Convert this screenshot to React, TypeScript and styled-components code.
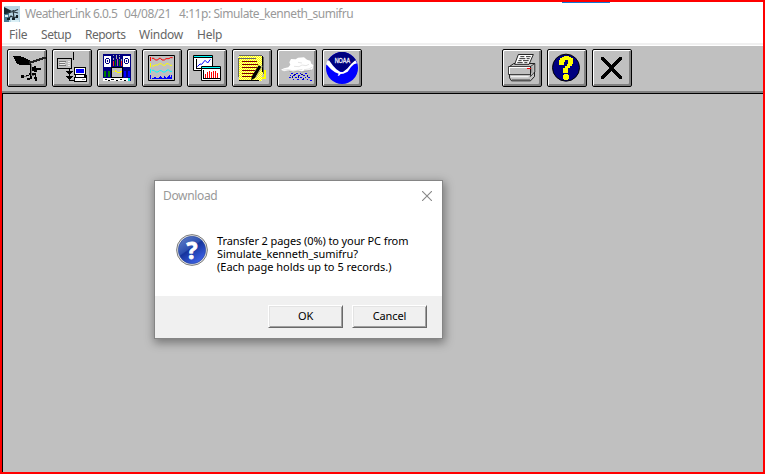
import React from "react";
import styled, { createGlobalStyle } from "styled-components";

const GlobalStyle = createGlobalStyle`
  * { box-sizing: border-box; }
  body { margin: 0; overflow: hidden; }
`;

const AppWindow = styled.div`
  position: relative;
  display: flex;
  flex-direction: column;
  width: 765px;
  height: 474px;
  border: 2px solid #ff0000;
  background: #ffffff;
  font-family: "Noto Sans", "Open Sans", sans-serif;
  font-size: 12px;
`;

const TopAccent = styled.div`
  position: absolute;
  top: 0;
  left: 560px;
  width: 48px;
  height: 1px;
  background: #0f7bd8;
`;

const TitleBar = styled.header`
  display: flex;
  align-items: center;
  height: 23px;
  padding: 1px 0 0 2px;
  color: #999999;
`;

const Title = styled.span<{ $spacing: number; $width?: number; $indent?: number }>`
  width: ${(p) => (p.$width ? `${p.$width}px` : "auto")};
  margin-left: ${(p) => p.$indent ?? 0}px;
  letter-spacing: ${(p) => p.$spacing}px;
  line-height: 16px;
  white-space: nowrap;
`;

const MenuBar = styled.nav`
  display: flex;
  height: 18px;
  padding: 2px 0 0 7px;
  gap: 14px;
  align-items: center;
  color: #666666;
`;

const MenuItem = styled.span<{ $width: number; $spacing?: number }>`
  width: ${(p) => p.$width}px;
  letter-spacing: ${(p) => p.$spacing ?? 0}px;
  line-height: 16px;
  white-space: nowrap;
`;

const Divider = styled.div`
  height: 3px;
  flex: none;
  background: #ffffff;
  border-top: 2px solid #f0f0f0;
`;

const Toolbar = styled.div`
  display: flex;
  flex: none;
  gap: 5px;
  height: 47px;
  padding: 3px 0 0 5px;
  background: #c0c0c0;
  border-bottom: 2px solid #808080;
`;

const ToolButton = styled.button<{ $gapBefore?: number }>`
  width: 40px;
  height: 38px;
  margin: 0 0 0 ${(p) => p.$gapBefore ?? 0}px;
  padding: 0;
  border: 1px solid #000000;
  border-radius: 2px;
  background: #c0c0c0;
  box-shadow: inset 1px 1px 0 #ffffff, inset -2px -2px 0 #808080;
`;

const ToolIcon = styled.svg`
  display: block;
  width: 38px;
  height: 36px;
`;

const Workspace = styled.main`
  flex: 1;
  border-top: 1px solid #000000;
  border-left: 1px solid #000000;
  background: #c0c0c0;
`;

const Dialog = styled.section`
  position: absolute;
  left: 152px;
  top: 178px;
  display: flex;
  flex-direction: column;
  width: 289px;
  height: 159px;
  border: 1px solid #858585;
  background: #ffffff;
  box-shadow: 1px 3px 9px 1px rgba(0, 0, 0, 0.38);
`;

const DialogHeader = styled.div`
  display: flex;
  justify-content: space-between;
  align-items: center;
  height: 29px;
  padding: 0 10px 0 8px;
  color: #999999;
`;

const CloseIcon = styled.svg`
  width: 10px;
  height: 10px;
`;

const DialogBody = styled.div`
  display: flex;
  flex: 1;
  padding: 24px 0 0 21px;
  gap: 9px;
`;

const Message = styled.div`
  color: #000000;
  font-size: 11px;
  line-height: 13px;
`;

const Line = styled.div<{ $spacing: number }>`
  letter-spacing: ${(p) => p.$spacing}px;
  white-space: nowrap;
`;

const DialogFooter = styled.div`
  display: flex;
  justify-content: flex-end;
  gap: 9px;
  height: 42px;
  padding: 9px 15px 0 0;
  background: #f0f0f0;
`;

const PushButton = styled.button`
  width: 75px;
  height: 23px;
  padding: 0 0 1px;
  border: 1px solid;
  border-color: #ffffff #696969 #696969 #ffffff;
  background: #f0f0f0;
  box-shadow: inset 1px 1px 0 #e3e3e3, inset -1px -1px 0 #a0a0a0;
  color: #000000;
  font-family: inherit;
  font-size: 11px;
  letter-spacing: -0.1px;
  line-height: 18px;
`;

const VaneIcon = () => (
  <ToolIcon viewBox="24 18 114 108" shapeRendering="crispEdges">
    <path d="M39 36h24v3h9v3h6v3h6v3h6v15H57v-3h-6v-3h-3v-6h-3v-6h-3v-6h-3z" fill="#000" />
    <path d="M87 51h12v-3h9v-3h9v-3h9v-3h12v6h-9v3h-9v3h-9v3h-9v3h-9v3h-6z" fill="#222" />
    <path d="M90 60h3v36h-3z" fill="#000" />
    <path d="M93 60h3v36h-3z" fill="#777" />
    <path d="M96 69h6v-3h6v6h15v6h-12v6h-9v-3h-6z" fill="#000" />
    <path d="M63 93h9v9h-9zM78 93h9v3h-9zM87 87h6v6h-6zM96 87h12v12h-3v-6h-9zM102 99h9v12h-6v-6h-3zM90 96h6v9h-6zM81 102h9v6h-9z" fill="#000" />
    <path d="M72 96h9v3h-9zM96 93h6v3h-6z" fill="#666" />
  </ToolIcon>
);

const DownloadIcon = () => (
  <ToolIcon viewBox="159 18 114 108" shapeRendering="crispEdges">
    <path d="M219 24h3v24h-3zM171 42h45v33h-45z" fill="#000" />
    <path d="M174 45h39v27h-39z" fill="#c0c0c0" />
    <path d="M177 51h21v3h-21zM177 57h18v3h-18zM177 63h21v3h-21z" fill="#777" />
    <path d="M180 54h15v3h-15zM180 60h15v3h-15zM204 51h6v3h-6zM204 57h6v3h-6zM204 63h6v3h-6z" fill="#eee" />
    <path d="M207 75h3v33h12v3h-15zM198 81h21v3h-3v3h-3v3h-9v-3h-3v-3h-3zM198 96h21v3h-3v3h-3v3h-9v-3h-3v-3h-3zM222 69h36v24h3v21h-39v-15h3v-6h-3z" fill="#000" />
    <path d="M225 72h30v18h-30z" fill="#fff" />
    <path d="M228 75h24v12h-24z" fill="#0000ff" />
    <path d="M228 93h24v6h-24zM225 102h33v9h-33z" fill="#fff" />
    <path d="M246 105h9v3h-9z" fill="#999" />
  </ToolIcon>
);

const BulletinIcon = () => (
  <ToolIcon viewBox="15 18 114 108" shapeRendering="crispEdges">
    <path d="M30 30h84v81H30z" fill="#000080" />
    <path d="M33 36h21v33H33zM90 36h21v33H90z" fill="#fff" />
    <path d="M39 42h9v3h3v12h-3v3h-9v-3h-3V45h3zM96 42h9v3h3v12h-3v3h-9v-3h-3V45h3z" fill="#000080" />
    <path d="M39 45h9v12h-9zM96 45h9v12h-9z" fill="#fff" />
    <path d="M42 48h3v6h-3zM99 48h3v6h-3z" fill="#000080" />
    <path d="M60 33h3v3h-3zM69 33h3v3h-3zM78 33h3v3h-3zM60 42h3v6h-3zM69 36h3v9h-3zM78 39h3v6h-3zM84 45h3v6h-3z" fill="#aaa" />
    <path d="M60 51h3v15h-3zM84 51h3v15h-3z" fill="#ff2020" />
    <path d="M66 48h3v18h-3zM78 48h3v18h-3z" fill="#008000" />
    <path d="M72 45h3v21h-3z" fill="#bd54ae" />
    <path d="M54 69h36v33H54z" fill="#000" />
    <path d="M57 72h30v27H57z" fill="#c0c0c0" />
    <path d="M60 81h6v-3h3v3h3v3h9v-3h6v3h-3v3H72v-3h-6v-3h-3v3h-3z" fill="#ffff00" />
    <path d="M33 81h18v18H33z" fill="#008000" />
    <path d="M39 75h6v30h-6z" fill="#000080" />
    <path d="M93 81h18v18H93z" fill="#0000ff" />
    <path d="M99 75h6v30h-6z" fill="#000080" />
    <path d="M30 102h75v9H30z" fill="#fff" />
    <path d="M36 105h6v3h-6zM45 108h6v3h-6zM54 105h9v3h-9zM69 108h6v3h-6zM81 105h6v3h-6zM93 108h6v3h-6z" fill="#000" />
    <path d="M105 102h6v9h-6z" fill="#00dddd" />
  </ToolIcon>
);

const StripIcon = () => (
  <ToolIcon viewBox="150 18 114 108">
    <path d="M166.500 34.500h78v75h-78z" fill="#c0c0c0" stroke="#000" strokeWidth="3" />
    <g fill="none" strokeWidth="3">
      <path d="M172.500 39v12M177 43h6l4 5h7l4-5h5l4 5h7l5-4h9l4-3h7" stroke="#ff0000" />
      <path d="M172.500 57v12M177 66h6l4-3h7l5-4h6l5 5h6l4-5h6l5 5h6" stroke="#ffff00" />
      <path d="M172.500 75v12M177 79h6l5 5h7l4-4h6l5 4h7l5-6h5l4 4h6" stroke="#00ffff" />
    </g>
    <path d="M171 93h3v12h-3zM177 102h6v-3h6v3h9v-3h3v-3h3v3h3v3h6v-6h3v3h3v3h3v-3h3v-3h3v-3h3v6h3v-6h3v12h-63z" fill="#0000ff" shapeRendering="crispEdges" />
  </ToolIcon>
);

const PlotIcon = () => (
  <ToolIcon viewBox="15 18 114 108">
    <path d="M31.500 34.500h57v45h-57z" fill="#fff" stroke="#000" strokeWidth="3" />
    <path d="M33 36h54v3H33z" fill="#00ffff" />
    <path d="M30 39h60v3H30zM39 45h3v27h42v3H39z" fill="#000" />
    <path d="M43 68l8-8 5 1 10-12 8 8 8-11" fill="none" stroke="#0000ff" strokeWidth="3" />
    <path d="M55.500 67.500h57v42h-57z" fill="#fff" stroke="#000" strokeWidth="3" />
    <path d="M57 69h54v3H57z" fill="#00ffff" />
    <path d="M54 72h60v3H54zM60 78h3v24h48v3H60z" fill="#000" />
    <path d="M66 90h3v12h-3zM72 84h3v18h-3zM78 81h3v21h-3zM84 84h3v18h-3zM90 81h3v21h-3zM96 81h3v21h-3zM102 87h3v15h-3z" fill="#ff0000" />
  </ToolIcon>
);

const NotesIcon = () => (
  <ToolIcon viewBox="150 18 114 108">
    <defs>
      <pattern id="dither" width="6" height="6" patternUnits="userSpaceOnUse">
        <path d="M0 0h6v6H0z" fill="#ffff00" />
        <path d="M0 0h3v3H0zM3 3h3v3H3z" fill="#ffffa0" />
      </pattern>
    </defs>
    <path d="M243 78h6v27h-12v-6h6z" fill="#ffff00" />
    <path d="M168 33h69v12h3v45l-3 6v15h-69V99h-3V39h3z" fill="url(#dither)" />
    <path d="M168 33h69v3h-69zM240 39h3v51h-3zM165 42h3v57h-3zM168 42h51v3h-51z" fill="#666" />
    <path d="M237 36h3v48h-3zM168 108h60v3h-60z" fill="#000" />
    <path d="M177 51h45v3h-45zM177 60h48v3h-48zM177 69h45v3h-45zM177 78h39v3h-39zM177 87h36v3h-36zM177 96h30v3h-30z" fill="#800000" />
    <path d="M227 64l8 4-19 34-12 7 3-13z" fill="#000" />
    <path d="M235 63l3 4-20 35" stroke="#999" strokeWidth="2" fill="none" />
  </ToolIcon>
);

const RainIcon = () => (
  <ToolIcon viewBox="15 18 114 108">
    <path d="M24 77l9-4 13-3 6-8-3-7 5-10 14 1 7-5 18-1 9 7 10 3 3 9 6 4-2 12-10 5-15-1-7 4-12-2-15 3-14-5-13 3z" fill="#fff" />
    <path d="M30 78l16-1 12 3 15-1 15-3M63 67l15 1 9-5 12 2 9-4M93 77l15-2 10-6M75 55l12 2" fill="none" stroke="#d8d8d8" strokeWidth="2" />
    <path d="M48 81l12 3 15-3 12 3 15-3 12-3" fill="none" stroke="#909090" strokeWidth="2" />
    <path d="M54 87h6v3h-6zM69 87h6v3h-6zM81 87h3v3h-3zM96 87h6v3h-6zM51 93h3v3h-3zM60 93h6v3h-6zM75 93h6v3h-6zM90 93h6v3h-6zM48 99h6v3h-6zM66 99h6v3h-6zM81 99h6v3h-6zM96 99h3v3h-3zM105 99h6v3h-6zM60 105h3v3h-3zM72 105h6v3h-6zM87 105h6v3h-6zM102 105h3v3h-3zM111 108h6v3h-6z" fill="#0000ff" />
    <path d="M63 90h6v3h-6zM84 90h6v3h-6zM102 93h3v6h-3zM57 96h3v6h-3zM75 96h3v6h-3zM90 102h3v3h-3z" fill="#000080" />
  </ToolIcon>
);

const NoaaLabel = styled.text`
  fill: #ffffff;
  font-family: "Liberation Sans", sans-serif;
  font-size: 21px;
  stroke: #ffffff;
  stroke-width: 0.8px;
`;

const NoaaIcon = () => (
  <ToolIcon viewBox="150 18 114 108">
    <circle cx="207" cy="72" r="48" fill="#0000ff" />
    <path d="M165 49l7-9 8-7 9-5 11-4h14l11 4 9 5 8 7 7 9-16 14-15 16-9 4-12-3-11-9z" fill="#000080" />
    <path d="M159 61l4-11 5-1 12 16 10 11 12 8h8l14-11 11-14 12-10 5 9-9 3-9 8-10 14-13 6-8 1-5 5h-4l3-6-11-4-12-9-11-12z" fill="#fff" />
    <NoaaLabel x="185" y="56" textLength="46" lengthAdjust="spacingAndGlyphs">NOAA</NoaaLabel>
  </ToolIcon>
);

const PrinterIcon = () => (
  <ToolIcon viewBox="24 18 114 108">
    <path d="M43.500 67.500l13-9H104l14.500 0V97.500l-12 13h-57l-6-9z" fill="#c0c0c0" stroke="#000" strokeWidth="2.500" />
    <path d="M70 31.500h45L102 61H59z" fill="#fff" stroke="#000" strokeWidth="2.500" />
    <path d="M76 38h12M93 38h14M73 44h18M95 44h9M70 50h10M84 50h17M67 56h16M88 56h9" stroke="#000" strokeWidth="2.500" />
    <path d="M40.500 67.500h66v24h-66zM106.500 67.500l13-9v25l-13 14z" fill="#c0c0c0" stroke="#000" strokeWidth="2" />
    <path d="M42 69h63v3H45v18h-3zM47 97h54v3H47z" fill="#fff" />
    <path d="M51 105h54v3H51zM109 70h3v16h-3z" fill="#808080" />
    <path d="M96 72h12v3H96z" fill="#ff0000" />
  </ToolIcon>
);

const HelpIcon = () => (
  <ToolIcon viewBox="159 18 114 108">
    <circle cx="213" cy="71" r="40.500" fill="#000080" stroke="#000" strokeWidth="3" />
    <path d="M192 62V48h3v-6h6v-4h6v-2h15v2h6v4h5v18h-3v6h-6v6h-6v15h-15V72h6v-6h6v-6h3V48h-9v6h-3v8zM204 93h3v-3h12v3h3v12h-3v3h-12v-3h-3z" fill="#ffff00" shapeRendering="crispEdges" />
  </ToolIcon>
);

const ExitIcon = () => (
  <ToolIcon viewBox="294 18 114 108" shapeRendering="crispEdges">
    <path d="M318 39h9v3h3v3h3v3h3v3h3v3h3v3h3v3h3v3h3v-3h3v-3h3v-3h3v-3h3v-3h3v-3h3v-3h3v-3h9v9h-3v3h-3v3h-3v3h-3v3h-3v3h-3v3h-3v3h-3v6h3v3h3v3h3v3h3v3h3v3h3v3h3v3h3v9h-9v-3h-3v-3h-3v-3h-3v-3h-3v-3h-3v-3h-3v-3h-3v-3h-3v3h-3v3h-3v3h-3v3h-3v3h-3v3h-3v3h-3v3h-9v-9h3v-3h3v-3h3v-3h3v-3h3v-3h3v-3h3v-3h3v-6h-3v-3h-3v-3h-3v-3h-3v-3h-3v-3h-3v-3h-3v-3h-3z" fill="#000" />
  </ToolIcon>
);

const AppIcon = () => (
  <svg width="16" height="16" viewBox="0 0 16 16">
    <path d="M0 0h16v16H0z" fill="#b5d3e2" />
    <path d="M0 7h5v9H0z" fill="#477790" />
    <path d="M0 1l8 4-6 3H0z" fill="#182830" />
    <path d="M2 7.500l7-2 5-2M9 4l1 8M4 13l3-3 3 2 4-2M10 6l4 1" stroke="#26343b" strokeWidth="1.200" fill="none" />
    <path d="M3 12h3v2H3zM12 9h2v3h-2zM8 12h3v2H8z" fill="#17242a" />
    <path d="M1 9h3v2H1zM7 14h8v2H7z" fill="#d9eef4" />
  </svg>
);

const QuestionSvg = styled.svg`
  overflow: visible;
  flex: none;
`;

const QuestionMark = styled.text`
  fill: #ffffff;
  font-family: "Open Sans", sans-serif;
  font-size: 23px;
  font-weight: 700;
  text-anchor: middle;
  stroke: #ffffff;
  stroke-width: 0.8px;
`;

const QuestionIcon = () => (
  <QuestionSvg width="32" height="32" viewBox="0 0 32 32">
    <defs>
      <linearGradient id="orb" x1="0" y1="0" x2="0.7" y2="1">
        <stop offset="0" stopColor="#6684cc" />
        <stop offset="0.48" stopColor="#2d50b0" />
        <stop offset="0.52" stopColor="#15349c" />
        <stop offset="1" stopColor="#3f63e8" />
      </linearGradient>
    </defs>
    <circle cx="16" cy="16" r="15.400" fill="#e4e4e4" stroke="#707070" strokeWidth="0.900" />
    <circle cx="16" cy="16" r="13.700" fill="url(#orb)" stroke="#29479b" strokeWidth="0.600" />
    <QuestionMark x="16" y="24.500">?</QuestionMark>
  </QuestionSvg>
);

const tools = [
  { name: "Station", Icon: VaneIcon },
  { name: "Download", Icon: DownloadIcon },
  { name: "Bulletin", Icon: BulletinIcon },
  { name: "Strip chart", Icon: StripIcon },
  { name: "Plot", Icon: PlotIcon },
  { name: "Notes", Icon: NotesIcon },
  { name: "Rain", Icon: RainIcon },
  { name: "NOAA", Icon: NoaaIcon },
  { name: "Print", Icon: PrinterIcon, gapBefore: 135 },
  { name: "Help", Icon: HelpIcon },
  { name: "Exit", Icon: ExitIcon },
];

export default function App() {
  return (
    <>
      <GlobalStyle />
      <AppWindow>
        <TopAccent />
        <TitleBar>
          <AppIcon />
          <Title $indent={5} $width={99} $spacing={-0.52}>WeatherLink 6.0.5</Title>
          <Title $width={55} $spacing={-0.4}>04/08/21</Title>
          <Title $spacing={-0.44}>4:11p: Simulate_kenneth_sumifru</Title>
        </TitleBar>
        <MenuBar>
          <MenuItem $width={18} $spacing={-0.2}>File</MenuItem>
          <MenuItem $width={30} $spacing={-0.45}>Setup</MenuItem>
          <MenuItem $width={40} $spacing={-0.5}>Reports</MenuItem>
          <MenuItem $width={44} $spacing={-0.25}>Window</MenuItem>
          <MenuItem $width={26} $spacing={-0.25}>Help</MenuItem>
        </MenuBar>
        <Divider />
        <Toolbar>
          {tools.map(({ name, Icon, gapBefore }) => (
            <ToolButton key={name} aria-label={name} $gapBefore={gapBefore}>
              <Icon />
            </ToolButton>
          ))}
        </Toolbar>
        <Workspace />
        <Dialog role="dialog" aria-label="Download">
          <DialogHeader>
            <Title $spacing={-0.35}>Download</Title>
            <CloseIcon viewBox="0 0 10 10">
              <path d="M0 0l10 10M10 0L0 10" stroke="#888" strokeWidth="1.100" />
            </CloseIcon>
          </DialogHeader>
          <DialogBody>
            <QuestionIcon />
            <Message>
              <Line $spacing={-0.1}>Transfer 2 pages (0%) to your PC from</Line>
              <Line $spacing={-0.07}>Simulate_kenneth_sumifru?</Line>
              <Line $spacing={0}>(Each page holds up to 5 records.)</Line>
            </Message>
          </DialogBody>
          <DialogFooter>
            <PushButton>OK</PushButton>
            <PushButton>Cancel</PushButton>
          </DialogFooter>
        </Dialog>
      </AppWindow>
    </>
  );
}
